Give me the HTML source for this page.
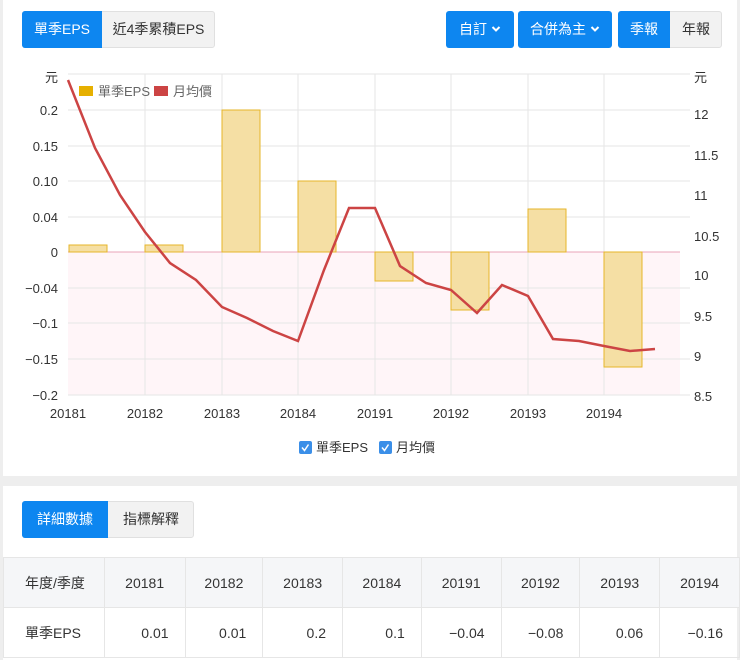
<!DOCTYPE html>
<html><head><meta charset="utf-8"><style>
*{box-sizing:border-box;margin:0;padding:0}
body{width:740px;height:660px;background:#eeeeee;font-family:"Liberation Sans","Noto Sans CJK TC",sans-serif;overflow:hidden;position:relative;color:#333}
.card{position:absolute;background:#fff;left:3px;width:734px}
.btn{position:absolute;height:37px;line-height:37px;font-size:14px;text-align:center;border-radius:3px}
.blue{background:#0d86f0;color:#fff}
.gray{background:#f2f2f2;color:#333;border:1px solid #e0e0e0}
.chev{display:inline-block;vertical-align:middle;margin-left:4px;margin-top:-2px}
table{position:absolute;left:3px;top:557px;border-collapse:collapse;font-size:14px}
td{height:50px;border:1px solid #e6e6e6;text-align:right;padding-right:16px}
tr.h td{background:#f5f6f8;text-align:center;padding:0}
</style></head><body>
<div class="card" style="top:0;height:476px"></div>
<div class="card" style="top:486px;height:174px"></div>

<div class="btn gray" style="left:22px;top:11px;width:193px"></div>
<div class="btn blue" style="left:22px;top:11px;width:80px;border-radius:3px 0 0 3px">單季EPS</div>
<div class="btn" style="left:102px;top:11px;width:113px;color:#333">近4季累積EPS</div>

<div class="btn blue" style="left:446px;top:11px;width:68px">自訂<svg class="chev" width="10" height="8"><path d="M1.5 2l3.5 3.5 3.5-3.5" stroke="#fff" stroke-width="2" fill="none"/></svg></div>
<div class="btn blue" style="left:518px;top:11px;width:94px">合併為主<svg class="chev" width="10" height="8"><path d="M1.5 2l3.5 3.5 3.5-3.5" stroke="#fff" stroke-width="2" fill="none"/></svg></div>
<div class="btn gray" style="left:618px;top:11px;width:104px"></div>
<div class="btn blue" style="left:618px;top:11px;width:52px;border-radius:3px 0 0 3px">季報</div>
<div class="btn" style="left:670px;top:11px;width:52px">年報</div>

<svg style="position:absolute;left:0;top:0" width="740" height="480" font-family="Liberation Sans,Noto Sans CJK TC,sans-serif">
<rect x="68" y="252" width="612" height="143" fill="#fff5f8"/>
<g stroke="#e6e6e6" stroke-width="1">
<line x1="68" y1="74" x2="690" y2="74"/><line x1="68" y1="110" x2="690" y2="110"/><line x1="68" y1="146" x2="690" y2="146"/><line x1="68" y1="181" x2="690" y2="181"/><line x1="68" y1="217" x2="690" y2="217"/><line x1="68" y1="288" x2="690" y2="288"/><line x1="68" y1="323" x2="690" y2="323"/><line x1="68" y1="359" x2="690" y2="359"/><line x1="68" y1="395" x2="690" y2="395"/>
<line x1="145" y1="74" x2="145" y2="395"/><line x1="222" y1="74" x2="222" y2="395"/><line x1="298" y1="74" x2="298" y2="395"/><line x1="375" y1="74" x2="375" y2="395"/><line x1="451" y1="74" x2="451" y2="395"/><line x1="528" y1="74" x2="528" y2="395"/><line x1="604" y1="74" x2="604" y2="395"/>
</g>
<line x1="68" y1="252" x2="680" y2="252" stroke="#e9a4b8" stroke-width="1"/>
<g fill="#f5dfa4" stroke="#e6b62a" stroke-width="1">
<rect x="69" y="245" width="38" height="7"/><rect x="145" y="245" width="38" height="7"/>
<rect x="222" y="110" width="38" height="142"/><rect x="298" y="181" width="38" height="71"/>
<rect x="375" y="252" width="38" height="29"/><rect x="451" y="252" width="38" height="58"/>
<rect x="528" y="209" width="38" height="43"/><rect x="604" y="252" width="38" height="115"/>
</g>
<polyline fill="none" stroke="#cc4444" stroke-width="2.5" points="68,80 95,148 120,195 145,232 170,263 196,280 222,307 247,318 273,331 298,341 324,270 349,208 375,208 400,266 426,283 451,290 477,313 502,285 528,296 553,339 579,341 604,346 630,351 655,349"/>
<g font-size="13" fill="#333" text-anchor="end">
<text x="58" y="82">元</text><text x="58" y="115">0.2</text><text x="58" y="151">0.15</text><text x="58" y="186">0.10</text><text x="58" y="222">0.04</text><text x="58" y="257">0</text><text x="58" y="293">−0.04</text><text x="58" y="328">−0.1</text><text x="58" y="364">−0.15</text><text x="58" y="400">−0.2</text>
</g>
<g font-size="13" fill="#333">
<text x="694" y="82">元</text><text x="694" y="119">12</text><text x="694" y="160">11.5</text><text x="694" y="200">11</text><text x="694" y="241">10.5</text><text x="694" y="280">10</text><text x="694" y="321">9.5</text><text x="694" y="361">9</text><text x="694" y="401">8.5</text>
</g>
<g font-size="13" fill="#333" text-anchor="middle">
<text x="68" y="418">20181</text><text x="145" y="418">20182</text><text x="222" y="418">20183</text><text x="298" y="418">20184</text><text x="375" y="418">20191</text><text x="451" y="418">20192</text><text x="528" y="418">20193</text><text x="604" y="418">20194</text>
</g>
<rect x="79" y="86" width="14" height="10" fill="#e6b000"/>
<text x="98" y="96" font-size="13" fill="#666">單季EPS</text>
<rect x="154" y="86" width="14" height="10" fill="#cc4444"/>
<text x="173" y="96" font-size="13" fill="#666">月均價</text>
<rect x="299" y="441" width="13" height="13" rx="2" fill="#3b8fe8"/>
<path d="M302 447.5l2.5 3 4-6" stroke="#fff" stroke-width="1.5" fill="none"/>
<text x="316" y="452" font-size="13" fill="#333">單季EPS</text>
<rect x="379" y="441" width="13" height="13" rx="2" fill="#3b8fe8"/>
<path d="M382 447.5l2.5 3 4-6" stroke="#fff" stroke-width="1.5" fill="none"/>
<text x="396" y="452" font-size="13" fill="#333">月均價</text>
</svg>

<div class="btn gray" style="left:22px;top:501px;width:172px"></div>
<div class="btn blue" style="left:22px;top:501px;width:86px;border-radius:3px 0 0 3px">詳細數據</div>
<div class="btn" style="left:108px;top:501px;width:86px">指標解釋</div>

<table>
<tr class="h"><td style="width:101px;text-align:left;padding-left:21px">年度/季度</td><td style="width:81px">20181</td><td style="width:78px">20182</td><td style="width:80px">20183</td><td style="width:79px">20184</td><td style="width:80px">20191</td><td style="width:79px">20192</td><td style="width:80px">20193</td><td style="width:80px">20194</td></tr>
<tr><td style="text-align:left;padding-left:21px">單季EPS</td><td>0.01</td><td>0.01</td><td>0.2</td><td>0.1</td><td>−0.04</td><td>−0.08</td><td>0.06</td><td>−0.16</td></tr>
</table>
</body></html>
